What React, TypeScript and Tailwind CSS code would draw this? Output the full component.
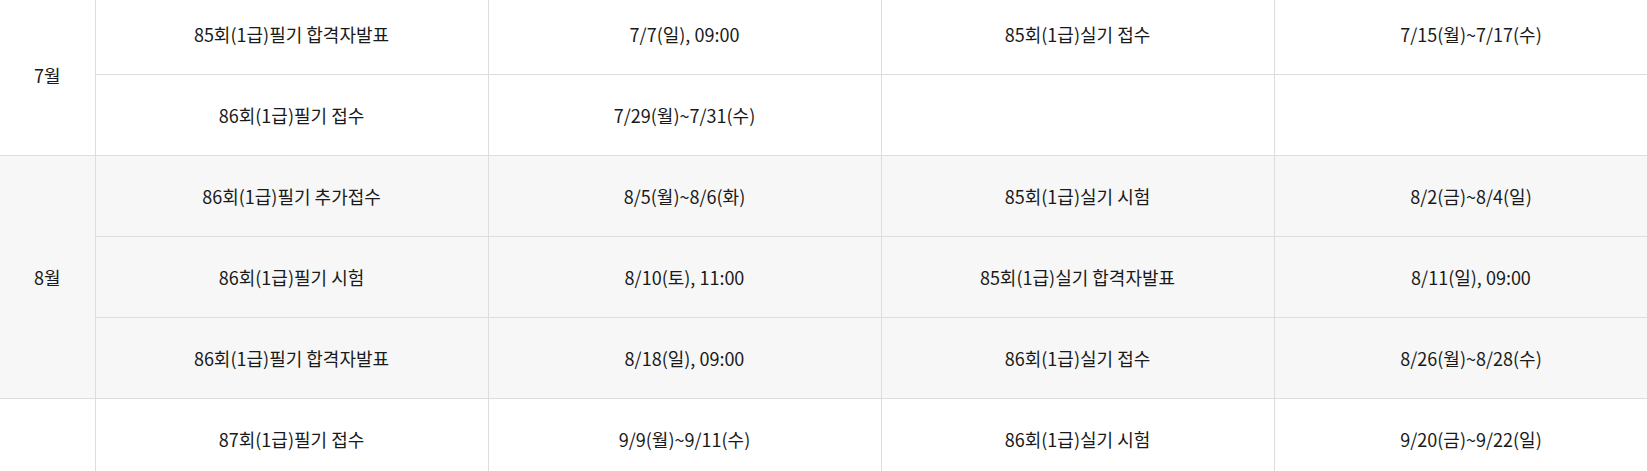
type Row = [string, string, string, string]

interface Group {
  month: string
  shaded: boolean
  rows: Row[]
}

const groups: Group[] = [
  {
    month: '7월',
    shaded: false,
    rows: [
      ['85회(1급)필기 합격자발표', '7/7(일), 09:00', '85회(1급)실기 접수', '7/15(월)~7/17(수)'],
      ['86회(1급)필기 접수', '7/29(월)~7/31(수)', '', ''],
    ],
  },
  {
    month: '8월',
    shaded: true,
    rows: [
      ['86회(1급)필기 추가접수', '8/5(월)~8/6(화)', '85회(1급)실기 시험', '8/2(금)~8/4(일)'],
      ['86회(1급)필기 시험', '8/10(토), 11:00', '85회(1급)실기 합격자발표', '8/11(일), 09:00'],
      ['86회(1급)필기 합격자발표', '8/18(일), 09:00', '86회(1급)실기 접수', '8/26(월)~8/28(수)'],
    ],
  },
  {
    month: '9월',
    shaded: false,
    rows: [
      ['87회(1급)필기 접수', '9/9(월)~9/11(수)', '86회(1급)실기 시험', '9/20(금)~9/22(일)'],
      ['87회(1급)필기 추가접수', '9/16(월)~9/17(화)', '', ''],
      ['87회(1급)필기 시험', '9/28(토), 11:00', '', ''],
    ],
  },
]

export default function App() {
  return (
    <div className="w-[1647px] h-[471px] overflow-hidden bg-white">
      <table
        className="-mt-[7px] w-[1668px] border-collapse table-fixed text-[18px] leading-none text-[#1a1a1a] text-center"
        style={{ fontFamily: '"Noto Sans CJK KR", "Noto Sans", sans-serif' }}
      >
        <colgroup>
          <col className="w-[95px]" />
          <col className="w-[393px]" />
          <col className="w-[393px]" />
          <col className="w-[393px]" />
          <col className="w-[394px]" />
        </colgroup>
        <tbody>
          {groups.map((g) =>
            g.rows.map((r, i) => (
              <tr key={g.month + i} className={g.shaded ? 'bg-[#f7f7f7]' : 'bg-white'}>
                {i === 0 && (
                  <td rowSpan={g.rows.length} className="border border-[#dddddd] border-l-0">
                    {g.month}
                  </td>
                )}
                {r.map((cell, j) => (
                  <td key={j} className="h-[81px] border border-[#dddddd] p-0">
                    {cell}
                  </td>
                ))}
              </tr>
            ))
          )}
        </tbody>
      </table>
    </div>
  )
}
